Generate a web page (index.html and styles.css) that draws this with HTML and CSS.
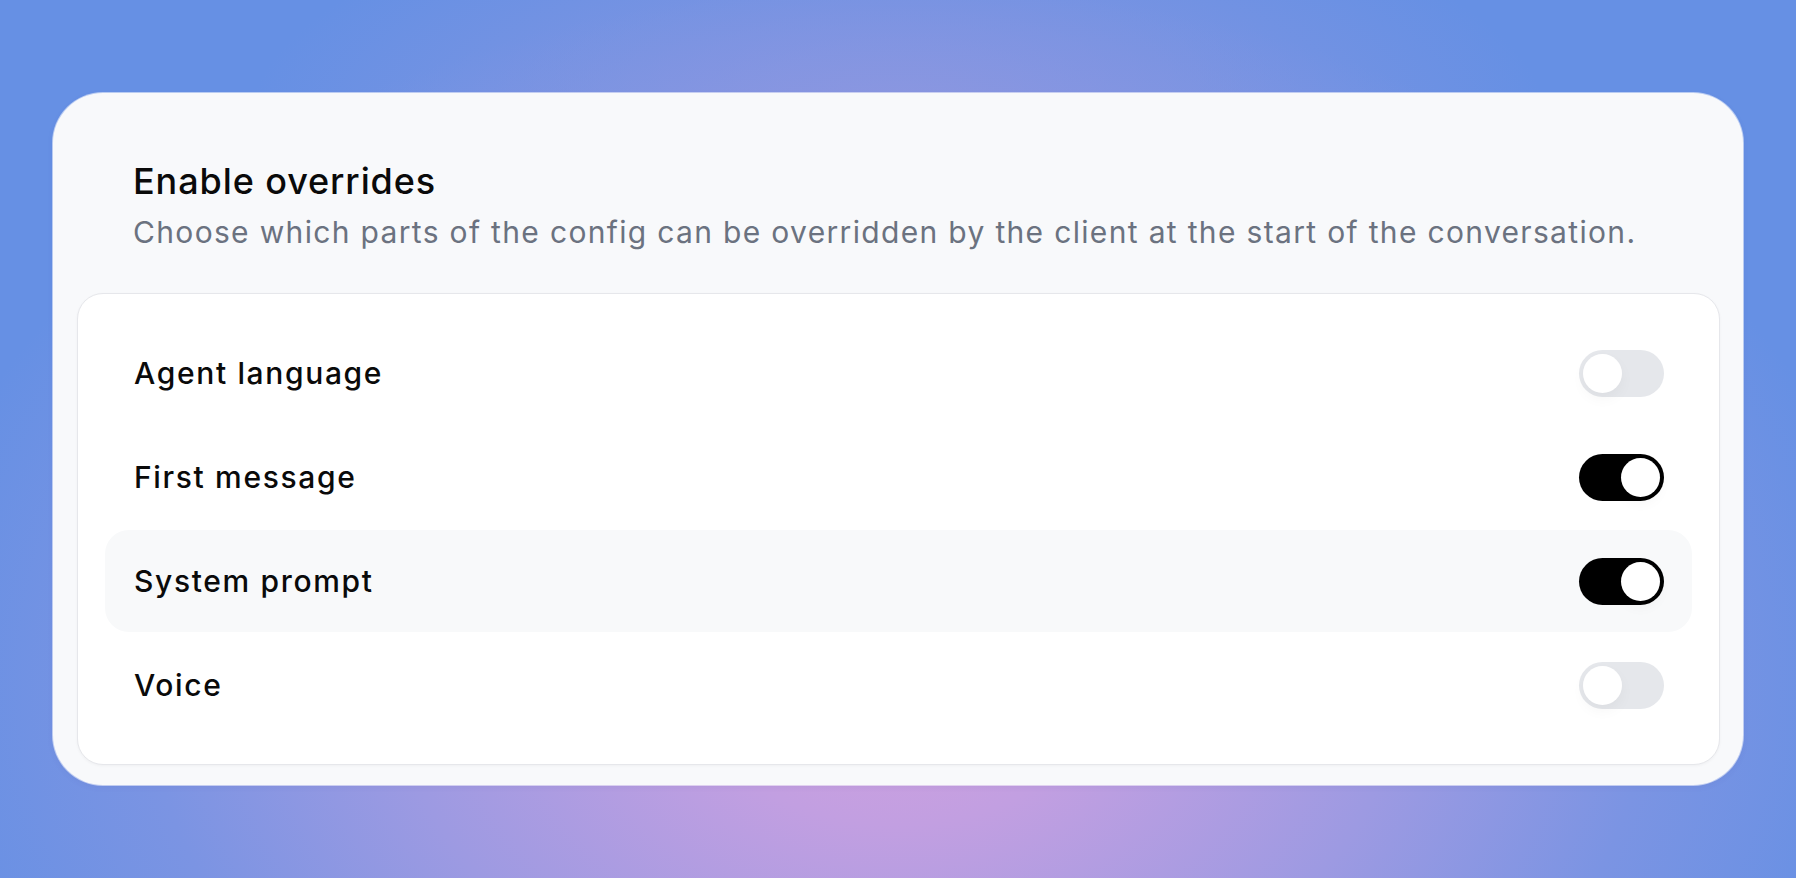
FILE: index.html
```html
<!DOCTYPE html>
<html lang="en">
<head>
<meta charset="utf-8">
<title>Enable overrides</title>
<link rel="stylesheet" href="styles.css">
</head>
<body>
  <main class="card">
    <header class="card-header">
      <h1 class="title">Enable overrides</h1>
      <p class="subtitle">Choose which parts of the config can be overridden by the client at the start of the conversation.</p>
    </header>
    <section class="panel">
      <div class="row">
        <span class="label">Agent language</span>
        <span class="toggle"><span class="knob"></span></span>
      </div>
      <div class="row">
        <span class="label">First message</span>
        <span class="toggle on"><span class="knob"></span></span>
      </div>
      <div class="row active">
        <span class="label">System prompt</span>
        <span class="toggle on"><span class="knob"></span></span>
      </div>
      <div class="row">
        <span class="label">Voice</span>
        <span class="toggle"><span class="knob"></span></span>
      </div>
    </section>
  </main>
</body>
</html>
```

FILE: styles.css
```css
* { box-sizing: border-box; }

html, body { height: 100%; }

body {
  margin: 0;
  padding: 93px 53px;
  font-family: Inter, "Noto Sans", "Liberation Sans", sans-serif;
  background-color: #6690e4;
  background-image:
    radial-gradient(ellipse 650px 240px at 50% 14%, rgba(142,151,224,0.95) 0%, rgba(142,151,224,0) 100%),
    radial-gradient(ellipse 1000px 700px at 50% 78%, #d2a1df 0%, #c29fe1 20%, #9d9ae2 50%, #7b94e3 75%, rgba(102,144,228,0) 100%);
  overflow: hidden;
}

.card {
  height: 692px;
  background: #f8f9fb;
  border-radius: 50px;
  box-shadow: 0 0 0 1px rgba(255,255,255,0.55), 0 2px 6px rgba(60,60,140,0.08);
  padding: 0 23px 21px 24px;
  display: flex;
  flex-direction: column;
}

.card-header {
  padding: 66px 0 41px 56px;
}

.title {
  margin: 0;
  font-size: 36px;
  line-height: 44px;
  font-weight: 500;
  color: #0a0a0a;
  letter-spacing: 0.9px;
}

.subtitle {
  margin: 9px 0 0;
  font-size: 30px;
  line-height: 40px;
  font-weight: 400;
  color: #6b7280;
  letter-spacing: 1.33px;
}

.panel {
  flex: 1;
  background: #ffffff;
  border: 1px solid #e6e7eb;
  border-radius: 26px;
  box-shadow: 0 1px 3px rgba(0,0,0,0.04);
  padding: 28px 27px;
  display: flex;
  flex-direction: column;
  gap: 2px;
}

.row {
  height: 102px;
  display: flex;
  align-items: center;
  justify-content: space-between;
  padding: 0 28px 0 29px;
  border-radius: 24px;
}

.row.active {
  background: #f8f9fa;
}

.label {
  font-size: 30px;
  font-weight: 500;
  color: #0a0a0a;
  letter-spacing: 1.65px;
}

.toggle {
  width: 85px;
  height: 47px;
  border-radius: 999px;
  background: #e5e7eb;
  padding: 4px;
  display: flex;
  align-items: center;
}

.toggle .knob {
  width: 39px;
  height: 39px;
  border-radius: 50%;
  background: #ffffff;
  box-shadow: 0 6px 14px rgba(0,0,0,0.04);
}

.toggle.on {
  background: #000000;
  justify-content: flex-end;
}
```
